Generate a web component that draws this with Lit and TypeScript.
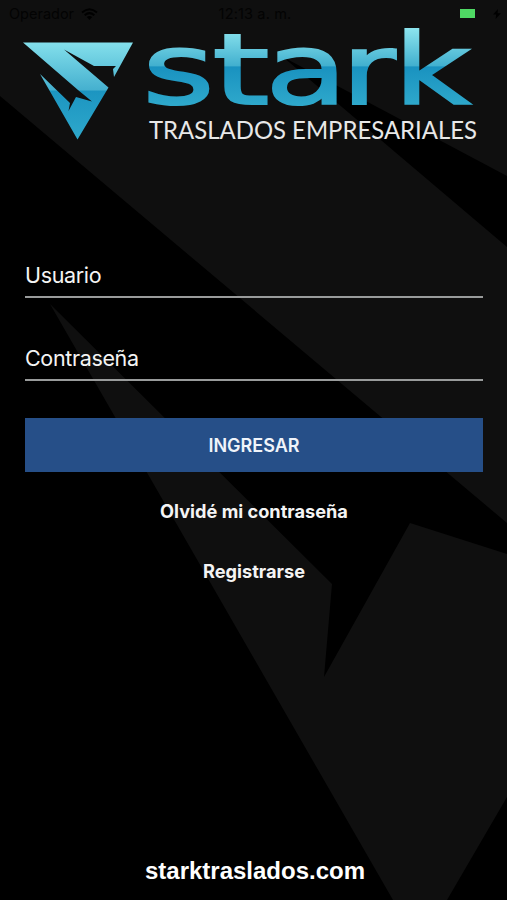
import { LitElement, html, css, svg } from "lit";
import { customElement } from "lit/decorators.js";

interface Glyph {
  char: string;
  x: number;
  stretch: number;
}

const WORDMARK: Glyph[] = [
  { char: "s", x: 142.5, stretch: 1.41 },
  { char: "t", x: 212.5, stretch: 1.48 },
  { char: "a", x: 265.5, stretch: 1.36 },
  { char: "r", x: 341.5, stretch: 1.34 },
  { char: "k", x: 394, stretch: 1.34 },
];

@customElement("status-bar")
export class StatusBar extends LitElement {
  static styles = css`
    :host {
      display: grid;
      grid-template-columns: 1fr auto 1fr;
      align-items: center;
      height: 27px;
      padding: 0 6px 1px 9px;
      font: 400 14.5px Inter, sans-serif;
      color: #030303;
    }
    .left {
      display: flex;
      align-items: center;
      gap: 7px;
    }
    .right {
      display: flex;
      align-items: center;
      justify-content: flex-end;
      gap: 18px;
    }
    .time {
      letter-spacing: 0.15px;
    }
    .battery {
      width: 15px;
      height: 9px;
      background: #4fd964;
    }
    svg {
      display: block;
    }
  `;

  render() {
    return html`
      <div class="left">
        <span>Operador</span>
        <svg width="17" height="12" viewBox="0 0 17 12" fill="none" stroke="#000" stroke-width="2">
          <path d="M1 4.5Q8.5-2 16 4.5M3.7 7.3Q8.5 3 13.3 7.3" />
          <path d="M8.5 12L5.8 9.1Q8.5 7 11.2 9.1Z" fill="#000" stroke="none" />
        </svg>
      </div>
      <span class="time">12:13 a. m.</span>
      <div class="right">
        <span class="battery"></span>
        <svg width="8" height="10" viewBox="0 0 8 10"><path d="M5 0L0 5.5H3.2L2.6 10L8 4.2H4.6Z" /></svg>
      </div>
    `;
  }
}

@customElement("stark-logo")
export class StarkLogo extends LitElement {
  static styles = css`
    :host,
    svg {
      display: block;
      overflow: visible;
    }
    .word {
      font: 400 98px "DejaVu Sans", sans-serif;
      stroke-width: 2.2px;
    }
    .tagline {
      font: 400 24.5px Lato, sans-serif;
      fill: #e8e8e8;
    }
  `;

  render() {
    return html`
      <svg width="507" height="122" viewBox="0 28 507 122">
        <defs>
          <linearGradient id="mark" gradientUnits="userSpaceOnUse" x1="0" y1="43" x2="0" y2="139">
            <stop offset="0" stop-color="#83dfeb" />
            <stop offset="0.49" stop-color="#45b0cf" />
            <stop offset="0.5" stop-color="#1c95c1" />
            <stop offset="1" stop-color="#2ea8cb" />
          </linearGradient>
          <linearGradient id="letters" gradientUnits="userSpaceOnUse" x1="0" y1="-76" x2="0" y2="0">
            <stop offset="0" stop-color="#8ce4ee" />
            <stop offset="0.49" stop-color="#42b0cf" />
            <stop offset="0.51" stop-color="#1992c0" />
            <stop offset="1" stop-color="#2ea8cb" />
          </linearGradient>
        </defs>
        <path
          fill="url(#mark)"
          d="M23 42.5H133L114 77L113 69L116 66H94L64 49.5L108.5 87.5L77.5 139.5L40 74L70 103L68.5 111L76 97L92 101.5L78 90Z"
        />
        ${WORDMARK.map(
          (g) => svg`<text class="word" fill="url(#letters)" stroke="url(#letters)"
            transform="translate(${g.x} 104.3) scale(${g.stretch} 1)">${g.char}</text>`
        )}
        <text class="tagline" x="149" y="139" textLength="328" lengthAdjust="spacingAndGlyphs">TRASLADOS EMPRESARIALES</text>
      </svg>
    `;
  }
}

@customElement("app-root")
export class AppRoot extends LitElement {
  static styles = css`
    :host {
      display: block;
    }
    .screen {
      display: flex;
      flex-direction: column;
      position: relative;
      box-sizing: border-box;
      width: 507px;
      height: 900px;
      overflow: hidden;
      background: #000;
      color: #f4f4f4;
      font-family: Inter, sans-serif;
    }
    .backdrop {
      position: absolute;
      inset: 0;
    }
    status-bar,
    stark-logo,
    form,
    footer {
      position: relative;
    }
    form {
      display: flex;
      flex-direction: column;
      margin: 85px 24px 0 25px;
    }
    .field {
      height: 83px;
      box-sizing: border-box;
    }
    .field span {
      display: block;
      box-sizing: border-box;
      height: 63px;
      padding-top: 26px;
      border-bottom: 2px solid #999b9b;
      font-size: 21.5px;
      line-height: 28px;
      letter-spacing: -0.35px;
    }
    .submit {
      height: 54px;
      margin-top: 17px;
      border: 0;
      padding: 0;
      background: #264f88;
      color: #f0f4fa;
      font: 600 18px Inter, sans-serif;
    }
    .link {
      align-self: center;
      font-size: 18.2px;
      font-weight: 700;
      line-height: 24px;
      margin-top: 27px;
    }
    .link + .link {
      margin-top: 36px;
    }
    footer {
      margin-top: auto;
      padding: 0 0 15px 3px;
      text-align: center;
      font: 700 24px/28px "Liberation Sans", sans-serif;
      color: #fff;
    }
  `;

  render() {
    return html`
      <main class="screen">
        <svg class="backdrop" width="507" height="900" viewBox="0 0 507 900" fill="#0f0f0f">
          <path d="M0 0H507V176L283 57L507 247V523L0 96Z" />
          <path d="M50 304L332 584L324 677L410 523L507 554V797L447 900H393Z" />
        </svg>
        <status-bar></status-bar>
        <stark-logo></stark-logo>
        <form>
          <label class="field"><span>Usuario</span></label>
          <label class="field"><span>Contraseña</span></label>
          <button class="submit" type="button">INGRESAR</button>
          <a class="link">Olvidé mi contraseña</a>
          <a class="link">Registrarse</a>
        </form>
        <footer>starktraslados.com</footer>
      </main>
    `;
  }
}
